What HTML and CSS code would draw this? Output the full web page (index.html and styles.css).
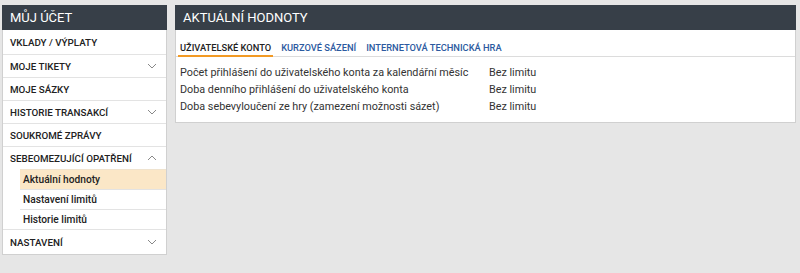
FILE: index.html
```html
<!DOCTYPE html>
<html lang="cs">
<head>
    <meta charset="UTF-8">
    <title>Můj účet</title>
    <link rel="stylesheet" href="styles.css">
</head>
<body>
    <div class="layout">
        <aside class="panel sidebar">
            <div class="panel-head">Můj účet</div>
            <ul class="menu">
                <li class="menu-item"><span>Vklady / Výplaty</span></li>
                <li class="menu-item"><span>Moje tikety</span>
                    <svg class="chev" viewBox="0 0 10 6"><polyline points="1,1 5,5 9,1"/></svg></li>
                <li class="menu-item"><span>Moje sázky</span></li>
                <li class="menu-item"><span>Historie transakcí</span>
                    <svg class="chev" viewBox="0 0 10 6"><polyline points="1,1 5,5 9,1"/></svg></li>
                <li class="menu-item"><span>Soukromé zprávy</span></li>
                <li class="menu-item open"><span>Sebeomezující opatření</span>
                    <svg class="chev" viewBox="0 0 10 6"><polyline points="1,5 5,1 9,5"/></svg></li>
                <li class="submenu">
                    <a class="sub-item active">Aktuální hodnoty</a>
                    <a class="sub-item">Nastavení limitů</a>
                    <a class="sub-item">Historie limitů</a>
                </li>
                <li class="menu-item last"><span>Nastavení</span>
                    <svg class="chev" viewBox="0 0 10 6"><polyline points="1,1 5,5 9,1"/></svg></li>
            </ul>
        </aside>

        <main class="panel content">
            <div class="panel-head">Aktuální hodnoty</div>
            <nav class="tabs">
                <a class="tab active">Uživatelské konto</a>
                <a class="tab">Kurzové sázení</a>
                <a class="tab">Internetová technická hra</a>
            </nav>
            <div class="limits">
                <div class="row"><span class="label">Počet přihlášení do uživatelského konta za kalendářní měsíc</span><span>Bez limitu</span></div>
                <div class="row"><span class="label">Doba denního přihlášení do uživatelského konta</span><span>Bez limitu</span></div>
                <div class="row"><span class="label">Doba sebevyloučení ze hry (zamezení možnosti sázet)</span><span>Bez limitu</span></div>
            </div>
        </main>
    </div>
</body>
</html>
```

FILE: styles.css
```css
body {
    margin: 0;
    background: #e6e6e6;
    font-family: Roboto, "Liberation Sans", sans-serif;
    color: #333;
}
.layout {
    display: flex;
    align-items: flex-start;
    gap: 8px;
    padding: 5px 4px 0 2px;
}
.panel {
    background: #fff;
    border: 1px solid #d0d0d0;
    border-top: none;
}
.sidebar {
    width: 163px;
}
.content {
    flex: 1;
}
.panel-head {
    background: #373f48;
    color: #fff;
    font-size: 13px;
    text-transform: uppercase;
    height: 25px;
    line-height: 25px;
    padding: 0 8px;
    margin: 0 -1px;
}
.menu {
    list-style: none;
    margin: 0;
    padding: 0;
}
.menu-item {
    display: flex;
    align-items: center;
    justify-content: space-between;
    height: 22px;
    padding: 0 7px;
    border-top: 1px solid #e3e3e3;
    font-size: 9.8px;
    font-weight: 500;
    text-transform: uppercase;
    color: #222;
}
.menu-item:first-child {
    border-top: none;
    height: 24px;
}
.menu-item.last {
    height: 24px;
}
.chev {
    width: 10px;
    height: 6px;
    margin-right: 2px;
    fill: none;
    stroke: #888;
    stroke-width: 1;
}
.submenu {
    display: flex;
    flex-direction: column;
    padding-left: 17px;
}
.sub-item {
    height: 19px;
    line-height: 20px;
    padding-left: 3px;
    border-top: 1px solid #e3e3e3;
    font-size: 10.2px;
    font-weight: 500;
    color: #222;
}
.sub-item.active {
    background: #fbe7c7;
    border-top-color: #efe3cf;
}
.tabs {
    display: flex;
    gap: 6px;
    padding: 0 2px;
    margin-top: 12px;
    border-bottom: 1px solid #dcdcdc;
}
.tab {
    font-size: 9.3px;
    font-weight: 500;
    text-transform: uppercase;
    color: #2c5aa0;
    padding: 0 2px;
    height: 13px;
    line-height: 11px;
    border-bottom: 2px solid transparent;
    margin-bottom: -1px;
}
.tab.active {
    color: #222;
    border-bottom-color: #f29a24;
}
.limits {
    padding: 7px 4px 7px;
    font-size: 10.8px;
}
.row {
    display: flex;
    height: 17px;
    line-height: 17px;
}
.label {
    width: 309px;
}
```
